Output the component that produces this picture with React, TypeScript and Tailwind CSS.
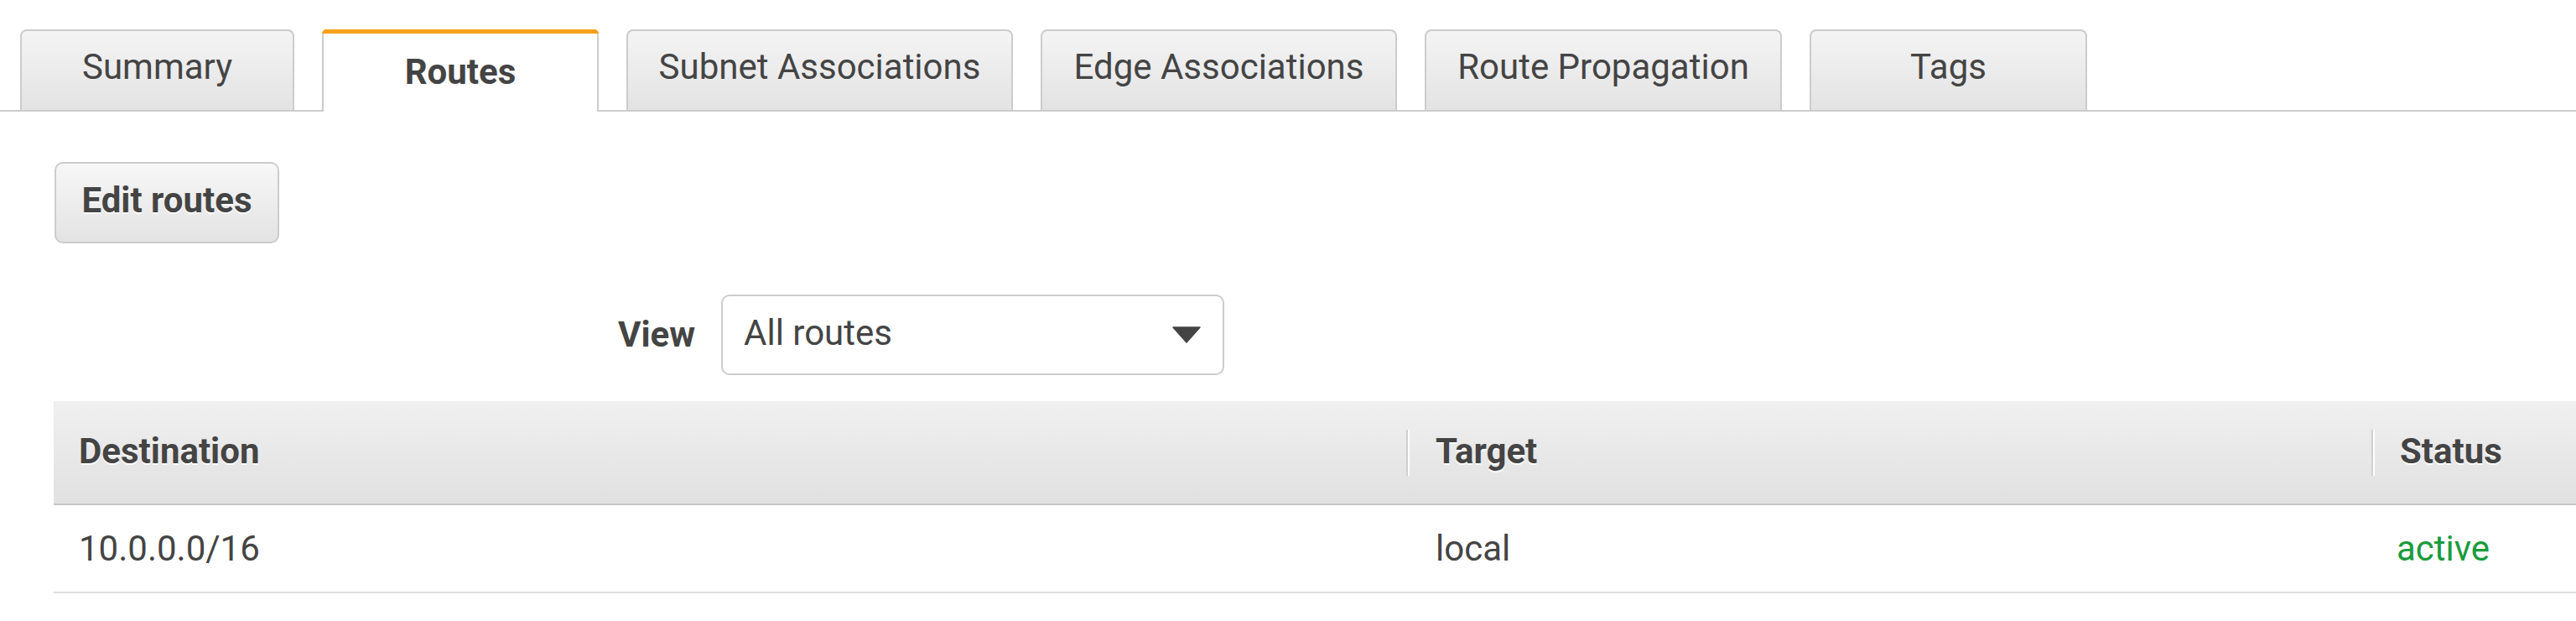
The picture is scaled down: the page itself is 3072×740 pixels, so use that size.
import { useState } from "react";

const tabs = [
  { name: "Summary", w: "w-[327px]" },
  { name: "Routes", w: "w-[330px]" },
  { name: "Subnet Associations", w: "w-[461px]" },
  { name: "Edge Associations", w: "w-[425px]" },
  { name: "Route Propagation", w: "w-[426px]" },
  { name: "Tags", w: "w-[331px]" },
];

export default function App() {
  const [active, setActive] = useState("Routes");

  return (
    <div className="w-full h-[740px] bg-white text-[#444] font-['Roboto',_'Liberation_Sans',_sans-serif] text-[42px] overflow-hidden">
      {/* tab strip */}
      <div className="flex gap-[33px] pl-[24px] pt-[35px] border-b-2 border-[#ccc]">
        {tabs.map((t) =>
          t.name === active ? (
            <button
              key={t.name}
              onClick={() => setActive(t.name)}
              className={`${t.w} h-[98px] -mb-[2px] bg-white border-x-2 border-[#ccc] rounded-t-[8px] flex justify-center pt-[27px] font-bold leading-[48px] relative`}
            >
              <span className="absolute left-[-2px] right-[-2px] top-0 h-[5px] rounded-t-[8px] bg-[#f6a11b]" />
              {t.name}
            </button>
          ) : (
            <button
              key={t.name}
              onClick={() => setActive(t.name)}
              className={`${t.w} h-[96px] bg-gradient-to-b from-[#f4f4f4] to-[#e3e3e3] border-2 border-b-0 border-[#ccc] rounded-t-[8px] flex justify-center pt-[19px] leading-[48px]`}
            >
              {t.name}
            </button>
          )
        )}
      </div>

      {/* actions */}
      <div className="pl-[65px] pt-[60px]">
        <button className="w-[268px] h-[97px] rounded-[10px] border-2 border-[#ccc] bg-gradient-to-b from-[#f7f7f7] to-[#e3e3e3] font-bold leading-[48px] flex items-center justify-center pb-[5px] [text-shadow:0_2px_0_#fff]">
          Edit routes
        </button>
      </div>

      {/* view filter */}
      <div className="flex items-center gap-[31px] pl-[737px] pt-[61px]">
        <span className="font-bold leading-[48px]">View</span>
        <div className="w-[600px] h-[96px] rounded-[10px] border-2 border-[#ccc] bg-white flex items-center justify-between pl-[25px] pr-[26px] pb-[4px]">
          <span className="leading-[48px]">All routes</span>
          <svg width="34" height="20" viewBox="0 0 34 20" className="mt-[4px]">
            <path d="M1 1 H33 L17 19 Z" fill="#444" stroke="#444" strokeWidth="1.5" strokeLinejoin="round" />
          </svg>
        </div>
      </div>

      {/* routes table */}
      <div className="ml-[64px] mt-[31px]">
        <div className="grid grid-cols-[1613px_1151px_1fr] h-[124px] bg-gradient-to-b from-[#f0f0f0] to-[#e1e1e1] border-b-2 border-[#c6c6c6] font-bold [text-shadow:0_2px_0_#fff]">
          <div className="flex items-center pl-[30px] pb-[3px] leading-[48px]">Destination</div>
          <div className="flex items-center">
            <span className="w-[2px] h-[55px] bg-[#cfcfcf] border-r-2 border-white box-content" />
            <span className="pl-[31px] pb-[3px] leading-[48px]">Target</span>
          </div>
          <div className="flex items-center">
            <span className="w-[2px] h-[55px] bg-[#cfcfcf] border-r-2 border-white box-content" />
            <span className="pl-[30px] pb-[3px] leading-[48px]">Status</span>
          </div>
        </div>
        <div className="grid grid-cols-[1613px_1151px_1fr] h-[105px] border-b-2 border-[#dedede]">
          <div className="flex items-center pl-[30px] leading-[48px]">10.0.0.0/16</div>
          <div className="flex items-center pl-[35px] leading-[48px]">local</div>
          <div className="flex items-center pl-[30px] leading-[48px] text-[#1a9b3c]">active</div>
        </div>
      </div>
    </div>
  );
}
